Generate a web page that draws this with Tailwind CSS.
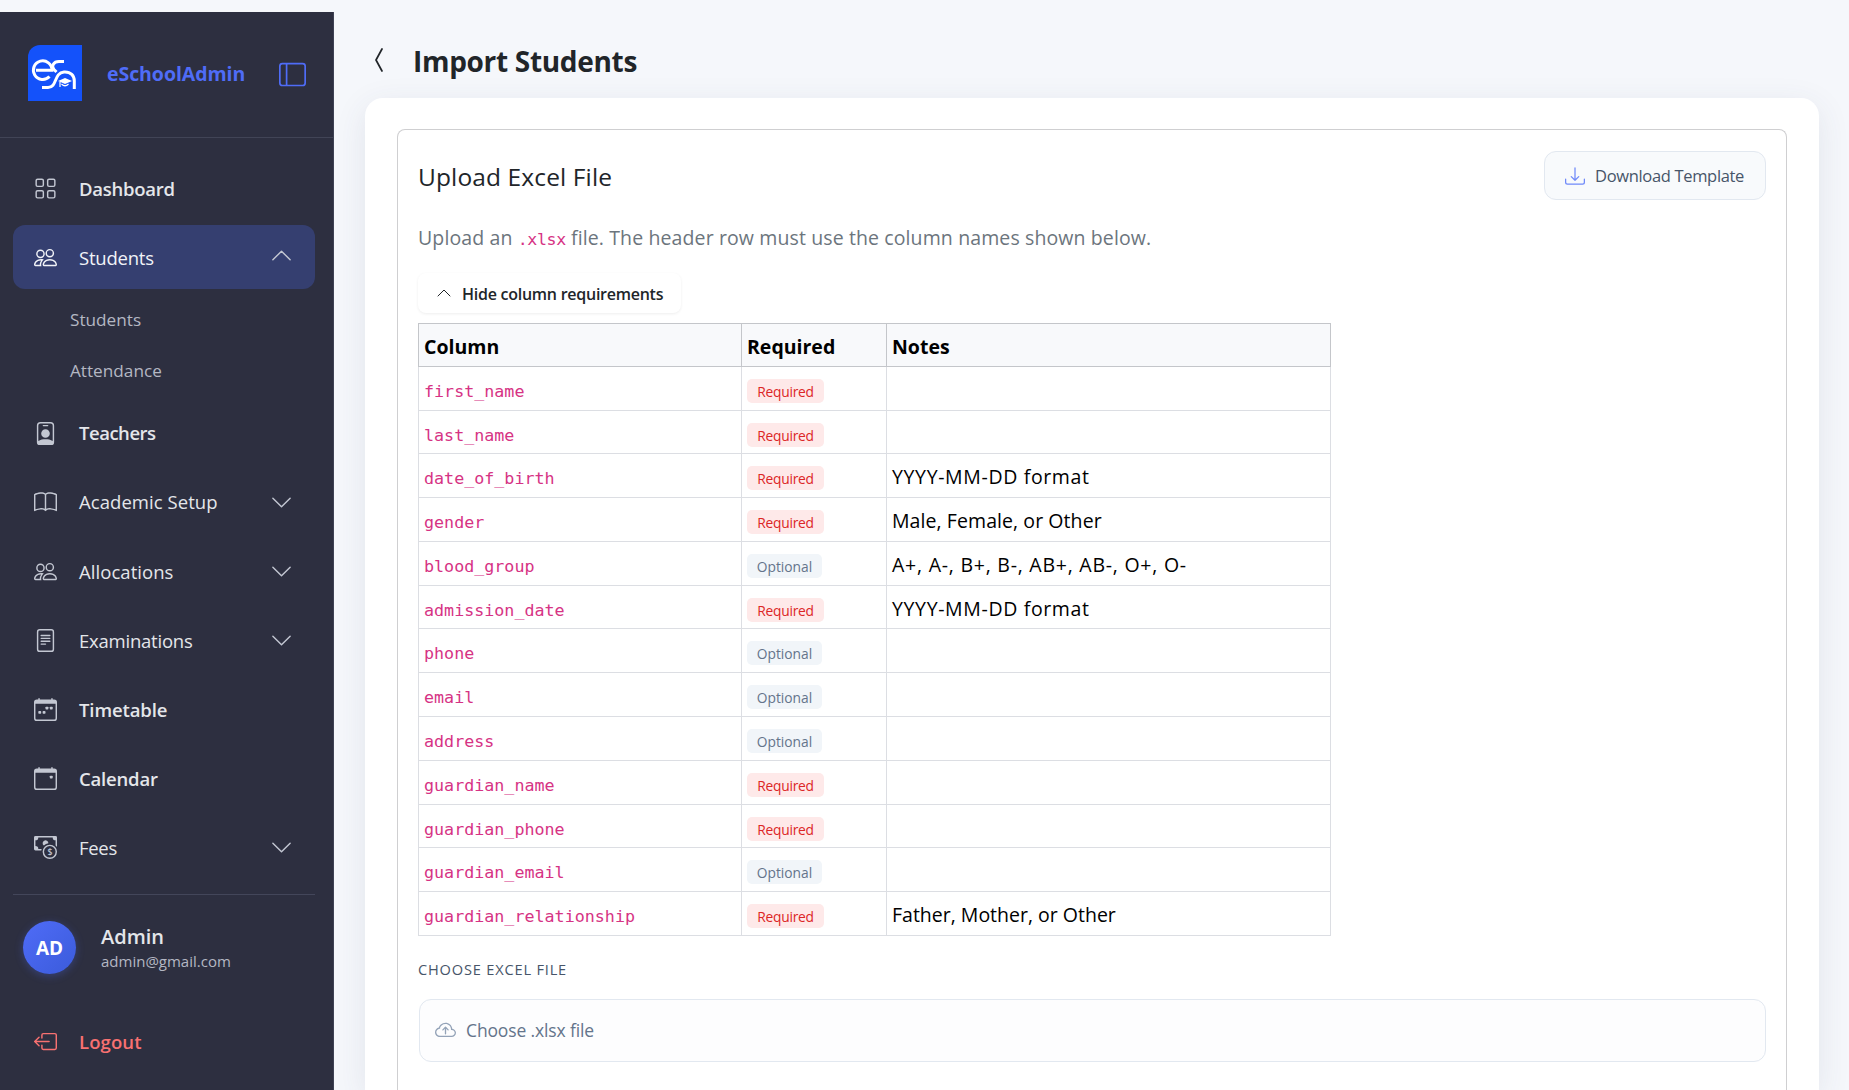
<!DOCTYPE html>
<html lang="en" class="h-full">
<head>
<meta charset="UTF-8">
<meta name="viewport" content="width=device-width, initial-scale=1.0">
<title>Import Students - eSchoolAdmin</title>
<script src="https://cdn.jsdelivr.net/npm/@tailwindcss/browser@4"></script>
</head>
<body class="h-screen overflow-hidden bg-[#f5f7fb] font-['Open_Sans','Noto_Sans',sans-serif] text-[#212529]">

<!-- Shared icons -->
<svg class="hidden">
    <symbol id="people" viewBox="0 0 16 16"><path d="M15 14s1 0 1-1-1-4-5-4-5 3-5 4 1 1 1 1zm-7.978-1L7 12.996c.001-.264.167-1.03.76-1.72C8.312 10.629 9.282 10 11 10c1.717 0 2.687.63 3.24 1.276.593.69.758 1.457.76 1.72l-.008.002-.014.002zM11 7a2 2 0 1 0 0-4 2 2 0 0 0 0 4m3-2a3 3 0 1 1-6 0 3 3 0 0 1 6 0M6.936 9.28a6 6 0 0 0-1.23-.247A7 7 0 0 0 5 9c-4 0-5 3-5 4q0 1 1 1h4.216A2.24 2.24 0 0 1 5 13c0-1.01.377-2.042 1.09-2.904.243-.294.526-.569.846-.816M4.92 10A5.5 5.5 0 0 0 4 13H1c0-.26.164-1.03.76-1.724.545-.636 1.492-1.256 3.16-1.275ZM1.5 5.5a3 3 0 1 1 6 0 3 3 0 0 1-6 0m3-2a2 2 0 1 0 0 4 2 2 0 0 0 0-4"/></symbol>
    <symbol id="calendar" viewBox="0 0 16 16"><path d="M3.5 0a.5.5 0 0 1 .5.5V1h8V.5a.5.5 0 0 1 1 0V1h1a2 2 0 0 1 2 2v11a2 2 0 0 1-2 2H2a2 2 0 0 1-2-2V3a2 2 0 0 1 2-2h1V.5a.5.5 0 0 1 .5-.5M1 4v10a1 1 0 0 0 1 1h12a1 1 0 0 0 1-1V4z"/></symbol>
    <symbol id="chevron-down" viewBox="0 0 16 16"><path d="M2 5l6 6 6-6" fill="none" stroke="currentColor" stroke-linecap="round" stroke-linejoin="round"/></symbol>
    <symbol id="chevron-up" viewBox="0 0 16 16"><path d="M2 11l6-6 6 6" fill="none" stroke="currentColor" stroke-linecap="round" stroke-linejoin="round"/></symbol>
</svg>

<div class="flex h-full">
    <!-- Sidebar -->
    <aside class="mt-3 w-[334px] shrink-0 border-r border-[#3f4254] bg-[#2d2f40] text-[18.5px] text-[#e4e6ea]">
        <div class="flex h-[126px] items-center border-b border-[#414456] pb-px pl-7">
            <svg class="mb-0.5 h-[56px] w-[54px]" viewBox="0 0 54 56" fill="none">
                <path d="M12 0H54V56H0V12A12 12 0 0 1 12 0z" fill="#1452fa"/>
                <g stroke="#fff" stroke-width="3">
                    <path d="M8 25.3H24A9.3 9.3 0 1 0 21.500 31.500"/>
                    <path d="M36 16.500H31C25.500 16.500 23 21 26 24.500L28.500 27"/>
                    <path d="M14 42.500H20C29.500 42.500 25.500 28 36 27C43 26.500 46.300 31 46.300 36V44"/>
                </g>
                <path d="M30 36l7-3 7 3-7 3z" fill="#fff"/>
                <path d="M33.500 39q3.500 3.500 7 0M32 37v5" stroke="#fff" stroke-width="1.200"/>
            </svg>
            <span class="ml-[25px] w-[148px] text-[19.5px] font-bold tracking-[-0.003em] text-[#4f6cf7]">eSchoolAdmin</span>
            <svg class="ml-[24px] size-[27px] text-[#4f6cf7]" viewBox="0 0 16 16" fill="none" stroke="currentColor"><rect x=".5" y="1.500" width="15" height="13" rx="1.500"/><path d="M4.500 1.500v13"/></svg>
        </div>

        <nav class="flex flex-col gap-[5.1px] pt-[18px] pr-[18px] pl-[13px]">
            <a href="#" class="flex h-16 items-center gap-[22px] rounded-xl pr-[22px] pl-[21px] font-semibold tracking-[-0.014em]">
                <svg class="size-[23px] text-[#c3c7d2]" viewBox="0 0 16 16" fill="none" stroke="currentColor"><rect x="1.500" y="1.500" width="5" height="5" rx="1"/><rect x="9.500" y="1.500" width="5" height="5" rx="1"/><rect x="1.500" y="9.500" width="5" height="5" rx="1"/><rect x="9.500" y="9.500" width="5" height="5" rx="1"/></svg>
                <span class="pt-px">Dashboard</span>
            </a>
            <div>
                <a href="#" class="flex h-16 items-center gap-[22px] rounded-xl bg-[#353f70] pr-[22px] pl-[21px] font-medium tracking-[-0.012em] text-[#f1f3f8]">
                    <svg class="size-[23px]" fill="currentColor"><use href="#people"/></svg>
                    <span class="flex-1 pt-0.5">Students</span>
                    <svg class="mb-1 size-[23px] text-[#c3c7d2]"><use href="#chevron-up"/></svg>
                </a>
                <div class="flex flex-col pt-[5px] pl-[57px] text-[17.2px] text-[#b4b7c3]">
                    <a href="#" class="h-[51px] leading-[51px]">Students</a>
                    <a href="#" class="h-[51px] leading-[51px]">Attendance</a>
                </div>
            </div>
            <a href="#" class="flex h-16 items-center gap-[22px] rounded-xl pr-[22px] pl-[21px] font-semibold tracking-[-0.026em]">
                <svg class="size-[23px] text-[#c3c7d2]" viewBox="0 0 16 16" fill="currentColor"><path d="M6.500 2a.5.5 0 0 0 0 1h3a.5.5 0 0 0 0-1zM11 8a3 3 0 1 1-6 0 3 3 0 0 1 6 0"/><path d="M4.500 0A2.500 2.500 0 0 0 2 2.500V14a2 2 0 0 0 2 2h8a2 2 0 0 0 2-2V2.500A2.500 2.500 0 0 0 11.500 0zM3 2.500A1.500 1.500 0 0 1 4.500 1h7A1.500 1.500 0 0 1 13 2.500v10.795a4.200 4.200 0 0 0-.776-.492C11.392 12.387 10.063 12 8 12s-3.392.387-4.224.803a4.200 4.200 0 0 0-.776.492z"/></svg>
                <span>Teachers</span>
            </a>
            <a href="#" class="flex h-16 items-center gap-[22px] rounded-xl pr-[22px] pl-[21px] font-medium tracking-[0.003em]">
                <svg class="size-[23px] text-[#c3c7d2]" viewBox="0 0 16 16" fill="currentColor"><path d="M1 2.828c.885-.37 2.154-.769 3.388-.893 1.330-.134 2.458.063 3.112.752v9.746c-.935-.53-2.120-.603-3.213-.493-1.180.12-2.370.461-3.287.811zm7.500-.141c.654-.689 1.782-.886 3.112-.752 1.234.124 2.503.523 3.388.893v9.923c-.918-.35-2.107-.692-3.287-.81-1.094-.111-2.278-.039-3.213.492zM8 1.783C7.015.936 5.587.81 4.287.94c-1.514.153-3.042.672-3.994 1.105A.5.5 0 0 0 0 2.500v11a.5.5 0 0 0 .707.455c.882-.4 2.303-.881 3.680-1.020 1.409-.142 2.590.087 3.223.877a.5.5 0 0 0 .78 0c.633-.79 1.814-1.019 3.222-.877 1.378.139 2.800.62 3.681 1.020A.5.5 0 0 0 16 13.500v-11a.5.5 0 0 0-.293-.455c-.952-.433-2.480-.952-3.994-1.105C10.413.809 8.985.936 8 1.783"/></svg>
                <span class="flex-1">Academic Setup</span>
                <svg class="size-[23px] text-[#c3c7d2]"><use href="#chevron-down"/></svg>
            </a>
            <a href="#" class="flex h-16 items-center gap-[22px] rounded-xl pr-[22px] pl-[21px] font-medium tracking-[0.003em]">
                <svg class="size-[23px] text-[#c3c7d2]" fill="currentColor"><use href="#people"/></svg>
                <span class="flex-1">Allocations</span>
                <svg class="size-[23px] text-[#c3c7d2]"><use href="#chevron-down"/></svg>
            </a>
            <a href="#" class="flex h-16 items-center gap-[22px] rounded-xl pr-[22px] pl-[21px] font-medium tracking-[-0.012em]">
                <svg class="size-[23px] text-[#c3c7d2]" viewBox="0 0 16 16" fill="currentColor"><path d="M5 4a.5.5 0 0 0 0 1h6a.5.5 0 0 0 0-1zm-.5 2.500A.5.5 0 0 1 5 6h6a.5.5 0 0 1 0 1H5a.5.5 0 0 1-.5-.5M5 8a.5.5 0 0 0 0 1h6a.5.5 0 0 0 0-1zm0 2a.5.5 0 0 0 0 1h3a.5.5 0 0 0 0-1z"/><path d="M2 2a2 2 0 0 1 2-2h8a2 2 0 0 1 2 2v12a2 2 0 0 1-2 2H4a2 2 0 0 1-2-2zm10-1H4a1 1 0 0 0-1 1v12a1 1 0 0 0 1 1h8a1 1 0 0 0 1-1V2a1 1 0 0 0-1-1"/></svg>
                <span class="flex-1">Examinations</span>
                <svg class="size-[23px] text-[#c3c7d2]"><use href="#chevron-down"/></svg>
            </a>
            <a href="#" class="flex h-16 items-center gap-[22px] rounded-xl pr-[22px] pl-[21px] font-semibold tracking-[-0.006em]">
                <svg class="size-[23px] text-[#c3c7d2]" viewBox="0 0 16 16" fill="currentColor"><use href="#calendar"/><rect x="11" y="6" width="2" height="2" rx=".5"/><rect x="8" y="6" width="2" height="2" rx=".5"/><rect x="3" y="9" width="2" height="2" rx=".5"/><rect x="6" y="9" width="2" height="2" rx=".5"/></svg>
                <span>Timetable</span>
            </a>
            <a href="#" class="flex h-16 items-center gap-[22px] rounded-xl pr-[22px] pl-[21px] font-semibold tracking-[-0.01em]">
                <svg class="size-[23px] text-[#c3c7d2]" viewBox="0 0 16 16" fill="currentColor"><use href="#calendar"/><rect x="11" y="6" width="2" height="2" rx=".5"/></svg>
                <span>Calendar</span>
            </a>
            <a href="#" class="flex h-16 items-center gap-[22px] rounded-xl pr-[22px] pl-[21px] font-medium tracking-[-0.016em]">
                <svg class="size-[23px] text-[#c3c7d2]" viewBox="0 0 16 16" fill="currentColor"><circle cx="11" cy="11" r="4.500" fill="none" stroke="currentColor"/><text x="11" y="13.100" text-anchor="middle" font-size="6" font-weight="600">$</text><path d="M1 0a1 1 0 0 0-1 1v8a1 1 0 0 0 1 1h4.083q.088-.517.258-1H3a2 2 0 0 0-2-2V3a2 2 0 0 0 2-2h10a2 2 0 0 0 2 2v3.528c.38.34.717.728 1 1.154V1a1 1 0 0 0-1-1z"/><path d="M9.998 5.083 10 5a2 2 0 1 0-3.132 1.650 6 6 0 0 1 3.130-1.567"/></svg>
                <span class="flex-1">Fees</span>
                <svg class="size-[23px] text-[#c3c7d2]"><use href="#chevron-down"/></svg>
            </a>
        </nav>

        <div class="mt-[14px] mr-[18px] ml-[13px] border-t border-[#43465a] pt-[26px]">
            <div class="flex items-center pl-[10px]">
                <div class="flex size-[53px] items-center justify-center rounded-full bg-linear-to-br from-[#4f6cf7] to-[#3b5bdb] pt-0.5 text-[19px] font-bold text-white shadow-[0_2px_8px_rgba(79,108,247,0.3)]">AD</div>
                <div class="ml-[25px] flex flex-col pt-[3px]">
                    <span class="text-[20px] leading-[26px] font-semibold">Admin</span>
                    <span class="text-[15px] leading-[23px] text-[#b4b7c3]">admin@gmail.com</span>
                </div>
            </div>
            <a href="#" class="mt-9 flex h-16 items-center gap-[22px] pl-[21px] font-semibold tracking-[0.006em] text-[#f87171]">
                <svg class="size-[23px]" viewBox="0 0 16 16" fill="currentColor"><path d="M6 12.500a.5.5 0 0 0 .5.5h8a.5.5 0 0 0 .5-.5v-9a.5.5 0 0 0-.5-.5h-8a.5.5 0 0 0-.5.5v2a.5.5 0 0 1-1 0v-2A1.500 1.500 0 0 1 6.500 2h8A1.500 1.500 0 0 1 16 3.500v9a1.500 1.500 0 0 1-1.500 1.500h-8A1.500 1.500 0 0 1 5 12.500v-2a.5.5 0 0 1 1 0z"/><path d="M.146 8.354a.5.5 0 0 1 0-.708l3-3a.5.5 0 1 1 .708.708L1.707 7.500H10.500a.5.5 0 0 1 0 1H1.707l2.147 2.146a.5.5 0 0 1-.708.708z"/></svg>
                <span>Logout</span>
            </a>
        </div>
    </aside>

    <!-- Main content -->
    <main class="flex min-w-0 flex-1 flex-col pr-[30px] pl-[31px]">
        <div class="flex h-[98px] shrink-0 items-center pt-[22px] pl-[9px]">
            <svg class="h-[24px] w-[10px]" viewBox="0 0 10 24" fill="none" stroke="currentColor" stroke-width="1.700" stroke-linecap="round" stroke-linejoin="round"><path d="M8 1L2 12l6 11"/></svg>
            <h1 class="ml-[29px] pt-0.5 text-[28px] font-bold tracking-[-0.011em]">Import Students</h1>
        </div>

        <div class="min-h-0 flex-1 rounded-t-[18px] bg-white px-8 pt-[31px] shadow-[0_8px_32px_rgba(60,64,100,0.1)]">
            <div class="h-full rounded-t-lg border border-b-0 border-[#cfcfd1] px-5 pt-[21px]">
                <div class="flex items-center justify-between">
                    <h2 class="pt-[3px] text-[24.5px] tracking-[0.005em]">Upload Excel File</h2>
                    <button class="flex h-[49px] w-[222px] items-center rounded-xl border border-[#e2e8f0] bg-[#f8fafc] pt-0.5 pl-5 text-[16.5px] tracking-[-0.02em] text-[#475569]">
                        <svg class="mr-[10px] mb-0.5 size-5 text-[#6f89f9]" viewBox="0 0 16 16" fill="currentColor"><path d="M.5 9.900a.5.5 0 0 1 .5.5v2.500a1 1 0 0 0 1 1h12a1 1 0 0 0 1-1v-2.500a.5.5 0 0 1 1 0v2.500a2 2 0 0 1-2 2H2a2 2 0 0 1-2-2v-2.500a.5.5 0 0 1 .5-.5"/><path d="M7.646 11.854a.5.5 0 0 0 .708 0l3-3a.5.5 0 0 0-.708-.708L8.500 10.293V1.500a.5.5 0 0 0-1 0v8.793L5.354 8.146a.5.5 0 1 0-.708.708z"/></svg>
                        Download Template
                    </button>
                </div>

                <p class="mt-[23px] h-[30px] text-[19.5px] leading-[30px] tracking-[0.006em] whitespace-nowrap text-[#6c757d]">Upload an <code class="font-['DejaVu_Sans_Mono',monospace] text-[16.6px] tracking-[-0.022em] text-[#d63384]">.xlsx</code> file. The header row must use the column names shown below.</p>

                <button class="mt-5 flex h-[40px] w-[263px] items-center rounded-lg bg-white pl-[18px] text-[16px] font-semibold tracking-[-0.016em] shadow-[0_1px_3px_rgba(0,0,0,0.07)]">
                    <svg class="mr-[10px] size-4"><use href="#chevron-up"/></svg>
                    <span class="pt-px">Hide column requirements</span>
                </button>

                <table class="mt-[10px] w-[913px] table-fixed border-collapse text-[19.5px] text-black">
                    <thead>
                        <tr class="h-[43px] bg-[#f8f9fb] text-left">
                            <th class="w-[323px] border border-[#c4c6ca] px-[5px] pt-[3px] leading-6">Column</th>
                            <th class="w-[145px] border border-[#c4c6ca] px-[5px] pt-[3px] leading-6">Required</th>
                            <th class="border border-[#c4c6ca] px-[5px] pt-[3px] leading-6">Notes</th>
                        </tr>
                    </thead>
                    <tbody id="columnRows"></tbody>
                </table>

                <label class="mt-[23px] block h-5 text-[14.6px] leading-5 tracking-[0.056em] text-[#475569]">CHOOSE EXCEL FILE</label>
                <div class="mt-5 ml-px flex h-[63px] items-center rounded-xl border border-[#e2e8f0] bg-[#fdfdfe] pl-[15px] text-[17.5px] tracking-[-0.008em] text-[#64748b]">
                    <svg class="mr-[10px] size-[21px] text-[#94a3b8]" viewBox="0 0 16 16" fill="currentColor"><path d="M7.646 5.146a.5.5 0 0 1 .708 0l2 2a.5.5 0 0 1-.708.708L8.500 6.707V10.500a.5.5 0 0 1-1 0V6.707L6.354 7.854a.5.5 0 1 1-.708-.708z"/><path d="M4.406 3.342A5.530 5.530 0 0 1 8 2c2.690 0 4.923 2 5.166 4.579C14.758 6.804 16 8.137 16 9.773 16 11.569 14.502 13 12.687 13H3.781C1.708 13 0 11.366 0 9.318c0-1.763 1.266-3.223 2.942-3.593.143-.863.698-1.723 1.464-2.383m.653.757c-.757.653-1.153 1.440-1.153 2.056v.448l-.445.049C2.064 6.805 1 7.952 1 9.318 1 10.785 2.230 12 3.781 12h8.906C13.980 12 15 10.988 15 9.773c0-1.216-1.020-2.228-2.313-2.228h-.5v-.5C12.188 4.825 10.328 3 8 3a4.530 4.530 0 0 0-2.941 1.100z"/></svg>
                    Choose .xlsx file
                </div>
            </div>
        </div>
    </main>
</div>

<script>
    // name, required, note, note tracking, row height
    const wide = 'tracking-[0.033em]';
    const columns = [
        ['first_name', true, '', '', 'h-[44px]'],
        ['last_name', true, '', '', 'h-[43px]'],
        ['date_of_birth', true, 'YYYY-MM-DD format', wide, 'h-[44px]'],
        ['gender', true, 'Male, Female, or Other', 'tracking-[0.004em]', 'h-[44px]'],
        ['blood_group', false, 'A+, A-, B+, B-, AB+, AB-, O+, O-', 'tracking-[0.039em]', 'h-[44px]'],
        ['admission_date', true, 'YYYY-MM-DD format', wide, 'h-[43px]'],
        ['phone', false, '', '', 'h-[44px]'],
        ['email', false, '', '', 'h-[44px]'],
        ['address', false, '', '', 'h-[44px]'],
        ['guardian_name', true, '', '', 'h-[44px]'],
        ['guardian_phone', true, '', '', 'h-[43px]'],
        ['guardian_email', false, '', '', 'h-[44px]'],
        ['guardian_relationship', true, 'Father, Mother, or Other', '', 'h-[44px]']
    ];

    const badges = {
        true: '<span class="block h-6 w-[77px] rounded-[5px] bg-[#fee9e9] text-center text-[13.8px] leading-[25px] tracking-[-0.02em] text-[#dc2626]">Required</span>',
        false: '<span class="block h-6 w-[75px] rounded-[5px] bg-[#f1f5f9] text-center text-[13.8px] leading-[25px] text-[#64748b]">Optional</span>'
    };

    document.getElementById('columnRows').innerHTML = columns.map(([name, required, note, tracking, height]) => `
        <tr class="${height}">
            <td class="border border-[#dcdee3] px-[5px] pt-1 leading-5"><code class="font-['DejaVu_Sans_Mono',monospace] text-[16.7px] text-[#d63384]">${name}</code></td>
            <td class="border border-[#dcdee3] px-[5px] pt-[5px]">${badges[required]}</td>
            <td class="border border-[#dcdee3] px-[5px] pt-[3px] leading-6 ${tracking}">${note}</td>
        </tr>`).join('');
</script>
</body>
</html>
